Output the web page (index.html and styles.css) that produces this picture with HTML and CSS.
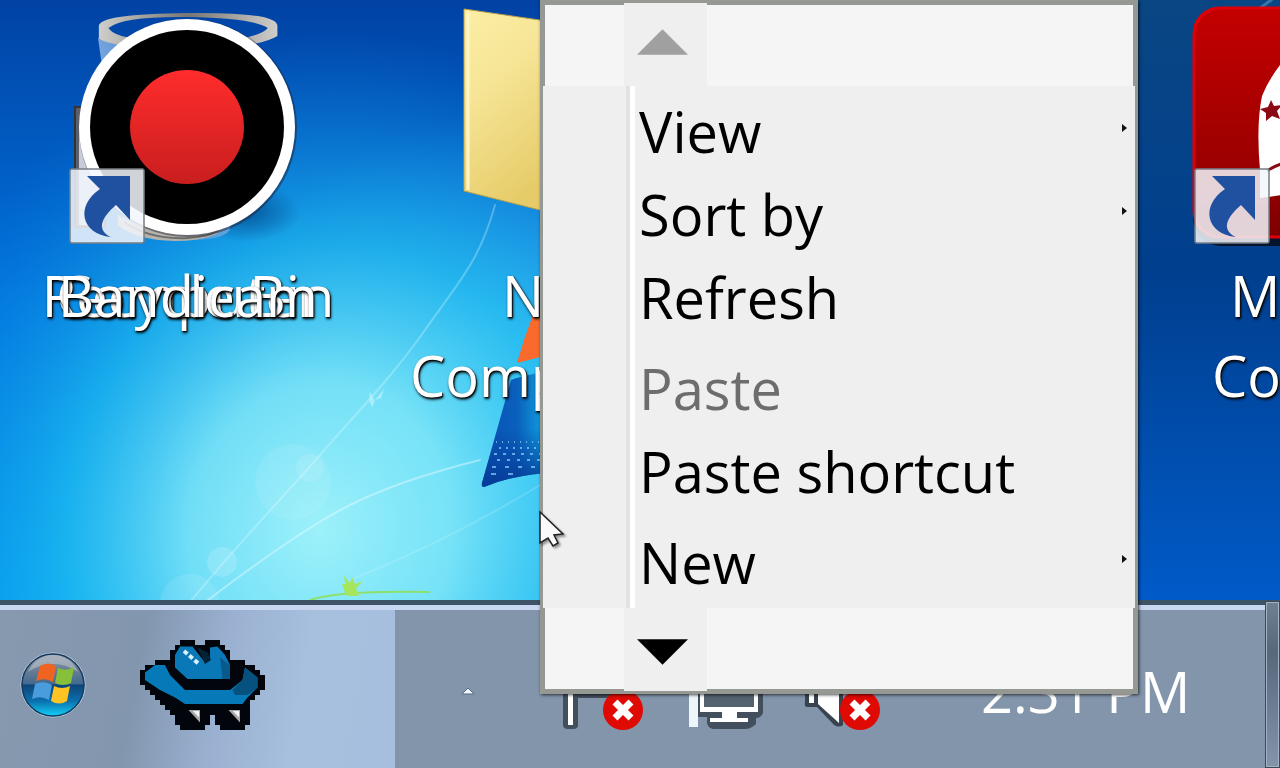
FILE: index.html
```html
<!DOCTYPE html>
<html lang="en">
<head>
  <meta charset="UTF-8">
  <meta name="viewport" content="width=device-width, initial-scale=1.0">
  <title>Desktop</title>
  <link rel="stylesheet" href="styles.css">
</head>
<body>
  <svg width="0" height="0" class="defs" aria-hidden="true">
    <symbol id="shortcut" viewBox="0 0 76 76">
      <rect x="1" y="1" width="74" height="74" rx="2" fill="#f2f6fb" fill-opacity=".86" stroke="#777f86" stroke-width="1.5"/>
      <path d="M18 8H61V52L47 37C32 50 27 62 42 69C12 66 6 38 31 21Z" fill="#2050a0"/>
    </symbol>
    <symbol id="error" viewBox="0 0 40 40">
      <circle cx="20" cy="20" r="20" fill="#e00a05"/>
      <path d="M12 12L28 28M28 12L12 28" stroke="#fff" stroke-width="7"/>
    </symbol>
  </svg>

  <main class="desktop">
    <svg class="wallpaper" viewBox="0 0 1280 600" preserveAspectRatio="xMidYMid slice" aria-hidden="true">
      <defs>
        <linearGradient id="sky" x1="0" y1="0" x2="0" y2="1">
          <stop offset="0" stop-color="#0142a4"/>
          <stop offset=".5" stop-color="#0074de"/>
          <stop offset="1" stop-color="#009cf2"/>
        </linearGradient>
        <radialGradient id="glow" gradientUnits="userSpaceOnUse" cx="320" cy="530" r="500" gradientTransform="translate(320 530) rotate(8) scale(.88 1) translate(-320 -530)">
          <stop offset="0" stop-color="#9df1fa"/>
          <stop offset=".3" stop-color="#7ce6f8" stop-opacity=".9"/>
          <stop offset=".58" stop-color="#22bff0" stop-opacity=".7"/>
          <stop offset="1" stop-color="#0a80e0" stop-opacity="0"/>
        </radialGradient>
        <radialGradient id="glowRight" gradientUnits="userSpaceOnUse" cx="530" cy="480" r="370">
          <stop offset="0" stop-color="#52cbfa"/>
          <stop offset=".4" stop-color="#4cc8f6" stop-opacity=".8"/>
          <stop offset="1" stop-color="#22a0e8" stop-opacity="0"/>
        </radialGradient>
        <linearGradient id="side" x1="0" y1="0" x2="0" y2="1">
          <stop offset="0" stop-color="#0a4683"/>
          <stop offset=".45" stop-color="#003f8e"/>
          <stop offset="1" stop-color="#005ac8"/>
        </linearGradient>
        <linearGradient id="pane" x1="0" y1="0" x2="1" y2="0">
          <stop offset="0" stop-color="#0a50b4"/>
          <stop offset=".45" stop-color="#0a60bc"/>
          <stop offset=".8" stop-color="#10a0e0"/>
        </linearGradient>
        <linearGradient id="paneLow" x1="0" y1="0" x2="0" y2="1">
          <stop offset=".5" stop-color="#053c98" stop-opacity="0"/>
          <stop offset="1" stop-color="#053c98"/>
        </linearGradient>
      </defs>
      <rect width="1280" height="600" fill="url(#sky)"/>
      <rect width="1000" height="600" fill="url(#glowRight)"/>
      <rect width="1000" height="600" fill="url(#glow)"/>
      <rect x="1000" width="280" height="600" fill="url(#side)"/>
      <path d="M1250 14Q1268 4 1280 -8" fill="none" stroke="#6aa6c8" stroke-opacity=".5" stroke-width="3"/>
      <circle cx="293" cy="482" r="38" fill="#fff" fill-opacity=".08"/>
      <circle cx="222" cy="562" r="15" fill="#fff" fill-opacity=".16"/>
      <circle cx="310" cy="468" r="14" fill="#fff" fill-opacity=".1"/>
      <circle cx="190" cy="604" r="30" fill="#fff" fill-opacity=".1"/>
      <g fill="none" stroke="#e6fbff" stroke-linecap="round">
        <path d="M190 602C250 530 290 490 320 455S390 380 425 330S480 260 495 205" stroke-opacity=".3" stroke-width="2"/>
        <path d="M208 600Q300 530 350 505T480 460" stroke-opacity=".45" stroke-width="2"/>
        <path d="M350 580Q450 540 540 485" stroke-opacity=".18" stroke-width="2"/>
      </g>
      <path d="M370 392l5 9l-3 6q-4-5-2-15zM384 389l-3 9l-6 2z" fill="#bff2fc" fill-opacity=".7"/>
      <path d="M310 600Q340 590 430 592" fill="none" stroke="#8fe06a" stroke-width="2"/>
      <path d="M343 575l7 8l2-6l3 7l8-3l-7 7l3 8h-12l-3-6l-2-6h4z" fill="#a6e65c"/>
      <path d="M533 315H560V352L517 363Q524 338 533 315Z" fill="#f96a2c"/>
      <path d="M511 380Q526 374 560 370V472Q515 474 484 487Q481 487 482 483Z" fill="url(#pane)"/>
      <path d="M511 380Q526 374 560 370V472Q515 474 484 487Q481 487 482 483Z" fill="url(#paneLow)"/>
      <g stroke="#8fd0ff" stroke-opacity=".7" stroke-width="2" fill="none">
        <path d="M496 442h60" stroke-dasharray="1 5"/>
        <path d="M499 448h60" stroke-dasharray="2 5"/>
        <path d="M494 454h60" stroke-dasharray="3 6"/>
        <path d="M497 460h60" stroke-dasharray="3 7"/>
        <path d="M492 467h50" stroke-dasharray="4 9"/>
        <path d="M491 474h24" stroke-dasharray="5 12"/>
      </g>
    </svg>

    <button class="icon icon-first" type="button">
      <svg viewBox="0 0 296 256" aria-hidden="true">
        <path d="M35 107h30v120h-30z" fill="#5a5f6a" stroke="#333" stroke-width="2"/>
        <path d="M39 125h20v100h-20z" fill="#c8ccd8"/>
      </svg>
      <span class="label">Computer</span>
    </button>
    <button class="icon icon-first" type="button">
      <svg viewBox="0 0 296 256" aria-hidden="true">
        <defs>
          <linearGradient id="bin" x1="0" y1="0" x2="1" y2="0">
            <stop offset="0" stop-color="#9cc4ee"/>
            <stop offset=".5" stop-color="#4a86d0"/>
            <stop offset="1" stop-color="#8fb8e6"/>
          </linearGradient>
          <linearGradient id="rim" x1="0" y1="0" x2="1" y2="0">
            <stop offset="0" stop-color="#d0cecb"/>
            <stop offset=".5" stop-color="#777672"/>
            <stop offset="1" stop-color="#d0cecb"/>
          </linearGradient>
          <radialGradient id="binShade">
            <stop offset="0" stop-color="#024a8c" stop-opacity=".8"/>
            <stop offset="1" stop-color="#024a8c" stop-opacity="0"/>
          </radialGradient>
        </defs>
        <ellipse cx="205" cy="212" rx="56" ry="30" fill="url(#binShade)"/>
        <path d="M58 38L84 222Q100 240 148 240T190 222L207 38Z" fill="url(#bin)" fill-opacity=".75"/>
        <path d="M78 215Q100 230 148 230T190 206L188 222Q180 241 135 241Q95 240 78 225Z" fill="#b4b2ac"/>
        <path d="M84 222Q110 240 148 238T188 216" fill="none" stroke="#6d6c68" stroke-width="2"/>
        <path d="M54 26Q54 14 147 13T240 26V36Q230 42 205 46V38Q225 34 230 28Q215 18 147 17T64 28Q70 36 90 38V46Q60 44 54 38Z" fill="url(#rim)" transform="translate(7 0) scale(.96 1)"/>
      </svg>
      <span class="label">Recycle Bin</span>
    </button>
    <button class="icon icon-first" type="button">
      <svg viewBox="0 0 296 256" aria-hidden="true">
        <defs>
          <linearGradient id="record" x1="0" y1="0" x2="0" y2="1">
            <stop offset="0" stop-color="#ff2c2c"/>
            <stop offset="1" stop-color="#c91e1e"/>
          </linearGradient>
        </defs>
        <circle cx="148" cy="128" r="109" fill="#223" fill-opacity=".5"/>
        <circle cx="147" cy="127" r="108" fill="#fff"/>
        <circle cx="147" cy="127" r="97" fill="#000"/>
        <circle cx="147" cy="127" r="57" fill="url(#record)"/>
        <use href="#shortcut" x="29" y="168" width="76" height="76"/>
      </svg>
      <span class="label">Bandicam</span>
    </button>

    <button class="icon icon-folder" type="button">
      <svg viewBox="0 0 296 256" aria-hidden="true">
        <defs>
          <linearGradient id="folder" x1="0" y1="0" x2=".4" y2="1">
            <stop offset="0" stop-color="#fbeea4"/>
            <stop offset=".4" stop-color="#f6e596"/>
            <stop offset="1" stop-color="#e6cb68"/>
          </linearGradient>
        </defs>
        <path d="M54 9L150 23V215L54 191Z" fill="url(#folder)" stroke="#b99f48"/>
        <path d="M58 12V190" stroke="#fff6c8" stroke-width="3"/>
      </svg>
      <span class="label">N<br>Comp</span>
    </button>

    <button class="icon icon-red" type="button">
      <svg viewBox="0 0 296 256" aria-hidden="true">
        <defs>
          <linearGradient id="red" x1="0" y1="0" x2="0" y2="1">
            <stop offset="0" stop-color="#c40000"/>
            <stop offset=".7" stop-color="#9a0000"/>
            <stop offset="1" stop-color="#7c0000"/>
          </linearGradient>
        </defs>
        <rect x="1" y="14" width="232" height="232" rx="28" fill="#03142c"/>
        <rect x="2" y="8" width="230" height="229" rx="26" fill="url(#red)" stroke="#e00008" stroke-width="3"/>
        <path d="M110 40Q80 70 70 96Q64 125 68 170V198Q90 196 110 190Z" fill="#fff"/>
        <path d="M79 100l3 6l8-1l-5 6l3 8l-8-3l-6 5v-8l-6-4l8-2z" fill="#8b0a14"/>
        <path d="M75 171Q82 166 92 163" stroke="#8b0a14" stroke-width="3" fill="none"/>
        <use href="#shortcut" x="2" y="168" width="76" height="76"/>
      </svg>
      <span class="label">M<br>Co</span>
    </button>
  </main>

  <footer class="taskbar">
    <div class="pinned">
      <button class="start" type="button" aria-label="Start">
        <svg viewBox="0 0 66 66">
          <defs>
            <linearGradient id="orb" x1="0" y1="0" x2="0" y2="1">
              <stop offset="0" stop-color="#8795a4"/>
              <stop offset=".25" stop-color="#6d8094"/>
              <stop offset=".48" stop-color="#426a90"/>
              <stop offset=".5" stop-color="#0d4578"/>
              <stop offset=".75" stop-color="#0b70ac"/>
              <stop offset="1" stop-color="#12d8ff"/>
            </linearGradient>
          </defs>
          <circle cx="33" cy="33" r="32" fill="url(#orb)" stroke="#c9dcea" stroke-width="1"/>
          <circle cx="33" cy="33" r="31" fill="none" stroke="#173b60" stroke-width="1.5"/>
          <path d="M8 20Q16 3 33 3T58 20Q46 12 33 12T8 20Z" fill="#fff" fill-opacity=".3"/>
          <path d="M20 14Q28 9 36 14L33 30Q25 25 16 29Z" fill="#ee6420"/>
          <path d="M38 16Q46 20 54 15L51 31Q43 35 35 31Z" fill="#86c038"/>
          <path d="M15 32Q24 28 32 33L29 48Q21 43 12 47Z" fill="#4a9ddc"/>
          <path d="M34 34Q42 38 50 34L47 49Q39 54 31 49Z" fill="#ffc423"/>
        </svg>
      </button>
      <button class="task" type="button" aria-label="Hat">
        <svg viewBox="0 0 25 18">
          <path shape-rendering="crispEdges" d="M8 0h3v1h2V0h3v1h1v1h1v2h3v1h2v1h1v1h1v3h-1v1h-1v1h-1v5h-1v1h-5v-1h-1v-2h-1v2h-1v1H8v-1H7v-2H6v-1H5v-1H4v-1H3v-1H2v-1H1V9H0V6h1V5h2V4h3V2h1V1h1z" fill="#02060c"/>
          <path d="M1 6.5L3 5H5L6 7L9 10H18L20.500 8L21 5.500L23.500 7.500V9.500L21.500 11.500L20.500 12.800H9L7 11.500L4 10L1 8Z" fill="#0679b8"/>
          <path d="M21 5.500L23.500 7.500V9.500L21.500 11H19L18.500 10L20.500 8Z" fill="#07517e"/>
          <path d="M8 1.300H10.500L13 4.500L14 3.500V1.500L15.500 1.300L17 3L18 5V7.800H9.500L7 5.500V3Z" fill="#0a78b6"/>
          <path d="M16 3.500L18 5V7.800H16.500Z" fill="#095a8c"/>
          <path d="M11.500 1.500L13.500 2.500L14.200 4L13 4.800Z" fill="#032238"/>
          <path d="M8.800 2.200L11.800 4.800" stroke="#d8f0fc" stroke-width=".8" stroke-dasharray=".9 .5"/>
          <path d="M9.700 14H12V16.500ZM17.700 14H20V16.500Z" fill="#a9a9a9"/>
          <path d="M10.600 14.200H11.800V15.500ZM18.600 14.200H19.800V15.500Z" fill="#f4f4f4"/>
        </svg>
      </button>
    </div>
    <div class="tray">
      <button class="chevron" type="button" aria-label="Show hidden icons">
        <svg viewBox="0 0 14 8"><path d="M1 7L7 1L13 7Z" fill="#eef6ff" stroke="#56687c"/></svg>
      </button>
      <button class="tray-icon" type="button" aria-label="Action Center">
        <svg viewBox="0 0 80 80">
          <path d="M0 8H48V47H15V75Q14 78 11 78H4Q0 77 0 74Z" fill="#434f5d"/>
          <path d="M5 12h5v62H5z" fill="#fff"/>
          <path d="M14 14h30v26H14z" fill="#fff"/>
          <use href="#error" x="40" y="39" width="40" height="40"/>
        </svg>
      </button>
      <button class="tray-icon" type="button" aria-label="Network">
        <svg viewBox="0 0 80 80">
          <path d="M15 6H80V62Q78 67 73 67V73Q68 78 62 78H30Q25 77 24 72V66H15Z" fill="#434f5d"/>
          <path d="M6 14h9v62H6z" fill="#edf4fa"/>
          <path d="M17 14H75V61H17Z" fill="#fff"/>
          <path d="M21 18H71V56H21Z" fill="#54616f"/>
          <path d="M39 61h15v6h11v4H27v-4h12z" fill="#fff"/>
        </svg>
      </button>
      <button class="tray-icon" type="button" aria-label="Volume">
        <svg viewBox="0 0 80 80">
          <path d="M2 30H14L34 12H40V74Q36 77 31 74L14 56H4Q1 56 2 50Z" fill="#384350"/>
          <path d="M6 34H11V52H6ZM15 34L36 16V72L15 53Z" fill="#fff"/>
          <use href="#error" x="37" y="39" width="40" height="40"/>
        </svg>
      </button>
      <time class="clock">2:31 PM</time>
    </div>
    <button class="peek" type="button" aria-label="Show desktop"></button>
  </footer>

  <nav class="menu" aria-label="Desktop menu">
    <button class="scroll up" type="button" aria-label="Scroll up" disabled>
      <svg viewBox="0 0 52 26"><path d="M0 26L26 0L52 26Z" fill="currentColor"/></svg>
    </button>
    <ul class="items">
      <li><button type="button">View<i class="arrow"></i></button></li>
      <li><button type="button">Sort by<i class="arrow"></i></button></li>
      <li><button type="button">Refresh</button></li>
      <li class="split"><button type="button" disabled>Paste</button></li>
      <li><button type="button">Paste shortcut</button></li>
      <li class="split"><button type="button">New<i class="arrow"></i></button></li>
    </ul>
    <button class="scroll down" type="button" aria-label="Scroll down">
      <svg viewBox="0 0 52 26"><path d="M0 0L26 26L52 0Z" fill="currentColor"/></svg>
    </button>
  </nav>

  <svg class="cursor" viewBox="0 0 26 38" aria-hidden="true">
    <path d="M1 2L24 24L15 25L19 33L14 36L9 28L1 33Z" fill="#fafafa" stroke="#222" stroke-width="1.5"/>
  </svg>
</body>
</html>
```
FILE: styles.css
```css
* {
  box-sizing: border-box;
}

body {
  margin: 0;
  height: 100vh;
  display: flex;
  flex-direction: column;
  overflow: hidden;
  position: relative;
  font-family: "Open Sans", "Noto Sans", sans-serif;
  font-size: 56px;
}

button {
  margin: 0;
  padding: 0;
  border: none;
  background: none;
  color: inherit;
  font: inherit;
}

svg {
  display: block;
}

.defs {
  position: absolute;
}

/* desktop */
.desktop {
  flex: 1;
  position: relative;
  overflow: hidden;
}

.wallpaper {
  width: 100%;
  height: 100%;
}

.icon {
  position: absolute;
  top: 0;
  width: 296px;
  color: #fff;
  line-height: 80px;
  text-shadow: 1px 2px 3px #000, 1px 1px 1px #222;
}

.icon svg {
  width: 296px;
  height: 256px;
}

.label {
  display: block;
  margin-top: -1px;
}

.icon-first {
  left: 40px;
}

.icon-folder {
  left: 410px;
  text-align: left;
  text-indent: 92px;
}

.icon-red {
  left: 1192px;
  text-align: left;
}

.icon-red .label {
  padding-left: 20px;
  text-indent: 18px;
}

/* taskbar */
.taskbar {
  height: 168px;
  flex: none;
  display: flex;
  border-top: 5px solid #3c5265;
  background: linear-gradient(#c9d6f1 5px, #8295ab 5px);
}

.pinned {
  width: 395px;
  margin-top: 5px;
  display: flex;
  align-items: center;
  gap: 54px;
  padding: 0 0 8px 20px;
  background: linear-gradient(100deg, #8799ae, #8296ae 35%, #9ab0d0 55%, #a7c0de 75%, #a7bfde);
}

.start svg {
  width: 66px;
  height: 66px;
}

.task svg {
  width: 125px;
  height: 90px;
}

.tray {
  flex: 1;
  display: flex;
  align-items: center;
  justify-content: flex-end;
  gap: 40px;
  padding: 8px 74px 0 0;
}

.chevron {
  padding: 0 8px;
  margin-right: 40px;
}

.chevron svg {
  width: 14px;
  height: 8px;
}

.tray-icon svg {
  width: 80px;
  height: 80px;
}

.clock {
  width: 210px;
  margin-left: 58px;
  color: #fff;
  line-height: 80px;
  white-space: nowrap;
}

.peek {
  width: 15px;
  margin-top: -4px;
  border: 1px solid #3b4a5a;
  box-shadow: inset 0 0 0 1px #a3b2c2;
  background: linear-gradient(#6f8092, #56687c 30%, #8295ab);
}

/* context menu */
.menu {
  position: absolute;
  top: 0;
  left: 540px;
  width: 598px;
  border: 5px solid #969894;
  background: #f5f5f5;
  box-shadow: 1px 1px 3px rgba(0, 0, 0, 0.7);
}

.scroll {
  display: flex;
  align-items: center;
  width: 83px;
  height: 81px;
  margin-left: 79px;
  padding-left: 13px;
  background: #efefef;
}

.scroll svg {
  width: 51px;
  height: 26px;
}

.up {
  padding-bottom: 8px;
  color: #a0a0a0;
  box-shadow: 0 -2px #efefef;
}

.down {
  padding-top: 6px;
  color: #000;
  box-shadow: 0 2px #efefef;
}

.items {
  list-style: none;
  margin: 0 -2px;
  padding: 4px 0;
  background: linear-gradient(to right, #efefef 83px, #e2e2e2 83px, #e2e2e2 87px, #fff 87px, #fff 92px, #efefef 92px);
}

.items button {
  display: flex;
  align-items: center;
  justify-content: space-between;
  width: 100%;
  height: 83px;
  padding: 0 8px 0 96px;
  color: #000;
  line-height: 83px;
}

.items button:disabled {
  color: #6d6d6d;
}

.split {
  padding-top: 8px;
}

.arrow {
  border: 4px solid transparent;
  border-left: 5px solid #111;
  border-right: none;
  margin-bottom: 8px;
}

.cursor {
  position: absolute;
  left: 539px;
  top: 510px;
  width: 26px;
  height: 38px;
  filter: drop-shadow(2px 2px 1px rgba(0, 0, 0, 0.4));
}
```
